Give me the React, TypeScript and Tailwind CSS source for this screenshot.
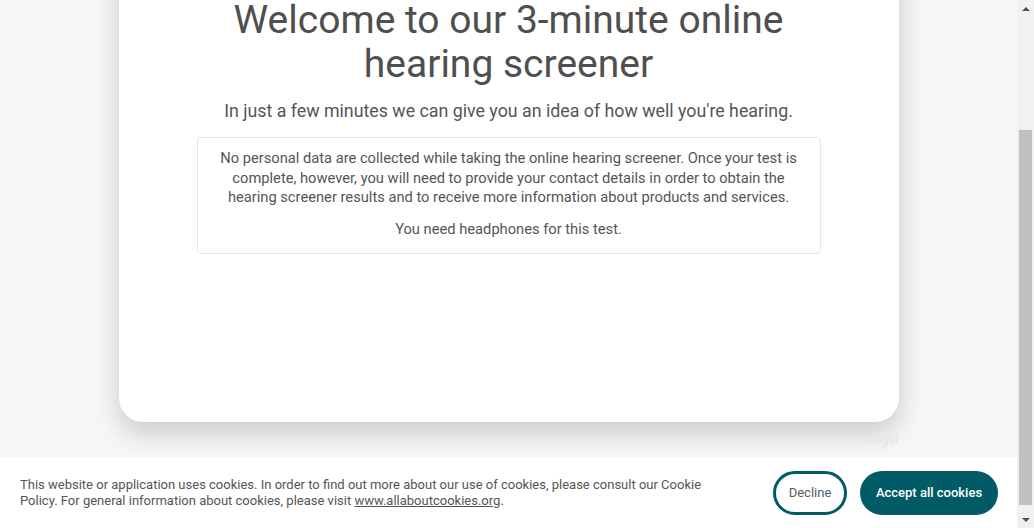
import React, { useEffect, useRef } from 'react';

const App: React.FC = () => {
  const scrollRef = useRef<HTMLDivElement>(null);

  // the reference is scrolled to the bottom of the page
  useEffect(() => {
    const el = scrollRef.current;
    if (el) el.scrollTop = el.scrollHeight;
  }, []);

  return (
    <div className="flex h-screen w-full overflow-hidden bg-[#f6f7f9] font-['Roboto',sans-serif]">
      <div
        ref={scrollRef}
        className="h-full flex-1 overflow-y-auto [scrollbar-width:none] [&::-webkit-scrollbar]:hidden"
      >
        <div className="pt-[40px] pb-[80px]">
          {/* Screener card */}
          <div className="mx-auto w-[780px] rounded-[24px] bg-white px-[78px] pt-[130px] pb-[168px] text-center shadow-[0_12px_28px_rgba(0,0,0,0.18)]">
            <h1 className="text-[39px] leading-[44px] font-normal text-[#4f4f4f]">
              Welcome to our 3-minute online hearing screener
            </h1>
            <p className="mt-[12px] text-[17.8px] leading-[26px] text-[#555555]">
              In just a few minutes we can give you an idea of how well you're hearing.
            </p>
            <div className="mt-[13px] rounded-[4px] border border-[#e6e7e9] px-[20px] pt-[11px] pb-[14px] text-[14.7px] leading-[19.5px] text-[#555555]">
              <p className="mb-[12px]">
                No personal data are collected while taking the online hearing screener. Once your test is
                complete, however, you will need to provide your contact details in order to obtain the
                hearing screener results and to receive more information about products and services.
              </p>
              <p>You need headphones for this test.</p>
            </div>
          </div>

          <div className="mx-auto mt-[9px] flex w-[780px] justify-end">
            <a className="text-[13px] leading-[17px] text-[#e3e5e8]">Legal</a>
          </div>
        </div>
      </div>

      {/* Window scrollbar */}
      <div className="flex h-full w-[17px] shrink-0 flex-col items-center bg-[#f1f1f1]">
        <div className="flex h-[17px] items-center justify-center">
          <div className="h-0 w-0 border-x-[4px] border-b-[4px] border-x-transparent border-b-[#505050]" />
        </div>
        <div className="mt-[113px] h-[375px] w-[13px] bg-[#c1c1c1]" />
        <div className="mt-auto flex h-[17px] items-center justify-center">
          <div className="h-0 w-0 border-x-[4px] border-t-[4px] border-x-transparent border-t-[#505050]" />
        </div>
      </div>

      {/* Cookie banner */}
      <div className="fixed bottom-0 left-0 right-[17px] flex h-[71px] items-center justify-between bg-white pl-[20px] pr-[19px]">
        <p className="w-[700px] text-[13px] leading-[16px] text-[#555555]">
          This website or application uses cookies. In order to find out more about our use of cookies, please consult our Cookie
          Policy. For general information about cookies, please visit{' '}
          <a className="underline">www.allaboutcookies.org</a>.
        </p>
        <div className="flex items-center gap-[13px]">
          <button className="h-[44px] w-[74px] rounded-full border-[3px] border-[#005b66] bg-white text-[13px] text-[#555a63]">
            Decline
          </button>
          <button className="h-[44px] w-[138px] rounded-full bg-[#005b66] text-[13px] font-medium text-white">
            Accept all cookies
          </button>
        </div>
      </div>
    </div>
  );
};

export default App;
